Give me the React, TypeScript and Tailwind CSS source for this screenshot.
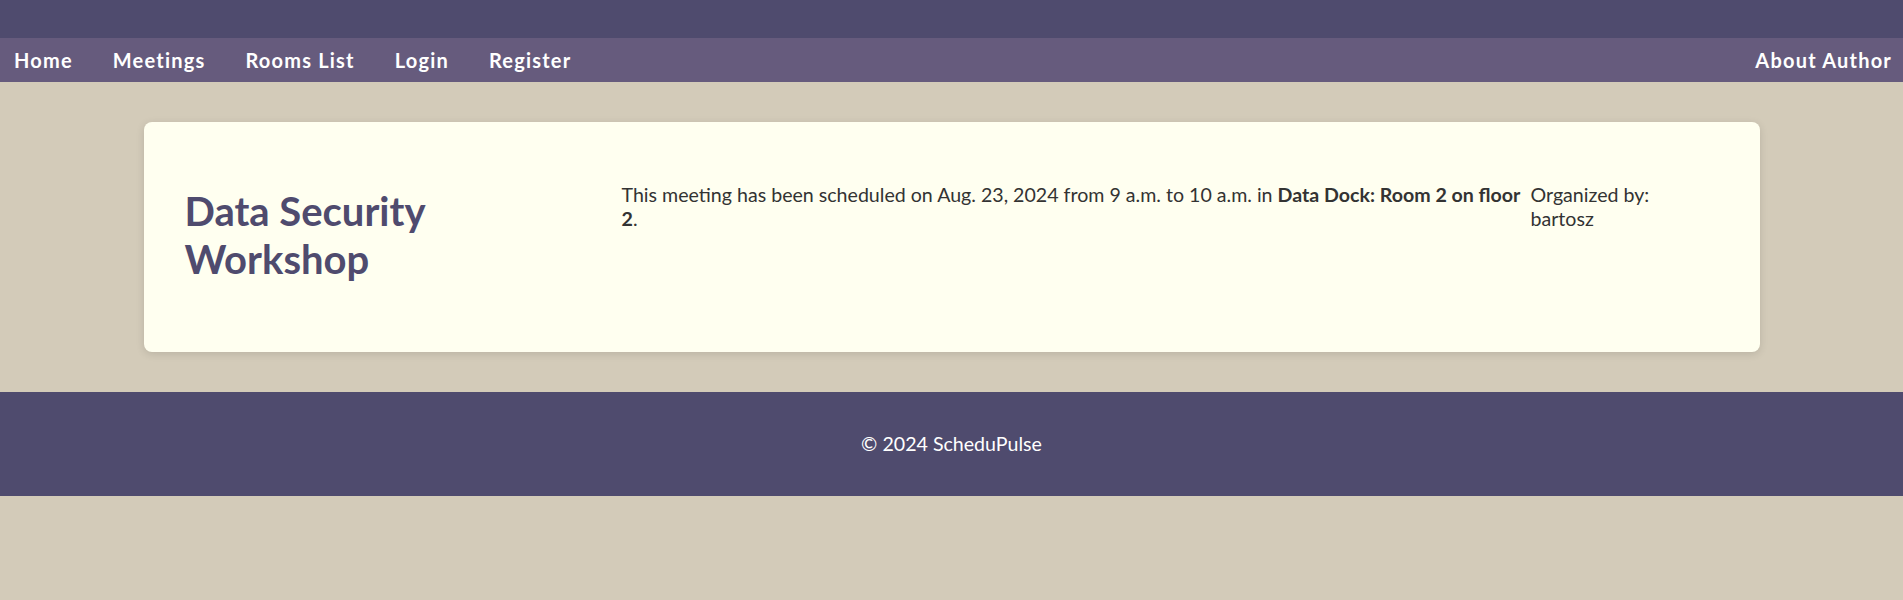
export default function App() {
  const links = ['Home', 'Meetings', 'Rooms List', 'Login', 'Register'];

  return (
    <div className="min-h-[600px] bg-[#d3cbb9] font-['Lato','Noto_Sans',sans-serif]">
      {/* top strip */}
      <div className="h-[38px] bg-[#4f4b6e]" />

      {/* navigation */}
      <nav className="flex h-[44px] items-center justify-between bg-[#665b7d] pl-[14px] pr-[11px]">
        <ul className="flex items-center gap-[40px]">
          {links.map((l) => (
            <li key={l}>
              <a href="#" className="text-[20px] font-bold tracking-[1.2px] text-white">
                {l}
              </a>
            </li>
          ))}
        </ul>
        <a href="#" className="text-[20px] font-bold tracking-[1.2px] text-white">
          About Author
        </a>
      </nav>

      {/* meeting card */}
      <main className="py-[40px]">
        <div className="mx-auto grid w-[1616px] grid-cols-[437px_909px_1fr] rounded-lg bg-[#fffff0] pt-[61px] pb-[69px] pl-[41px] pr-[41px] shadow-[0_2px_8px_rgba(0,0,0,0.12)]">
          <h1 className="mt-[4px] text-[40px] leading-[48px] font-bold text-[#4f4b6e]">
            Data Security
            <br />
            Workshop
          </h1>
          <p className="pr-[6px] text-[19.6px] leading-[1.25] text-[#333]">
            This meeting has been scheduled on Aug. 23, 2024 from 9 a.m. to 10 a.m. in{' '}
            <b>Data Dock: Room 2 on floor 2</b>.
          </p>
          <p className="text-[19.6px] leading-[1.2] text-[#333]">
            Organized by:
            <br />
            bartosz
          </p>
        </div>
      </main>

      <footer className="flex h-[104px] items-center justify-center bg-[#4f4b6e]">
        <p className="text-[19.6px] text-white">© 2024 ScheduPulse</p>
      </footer>
    </div>
  );
}
